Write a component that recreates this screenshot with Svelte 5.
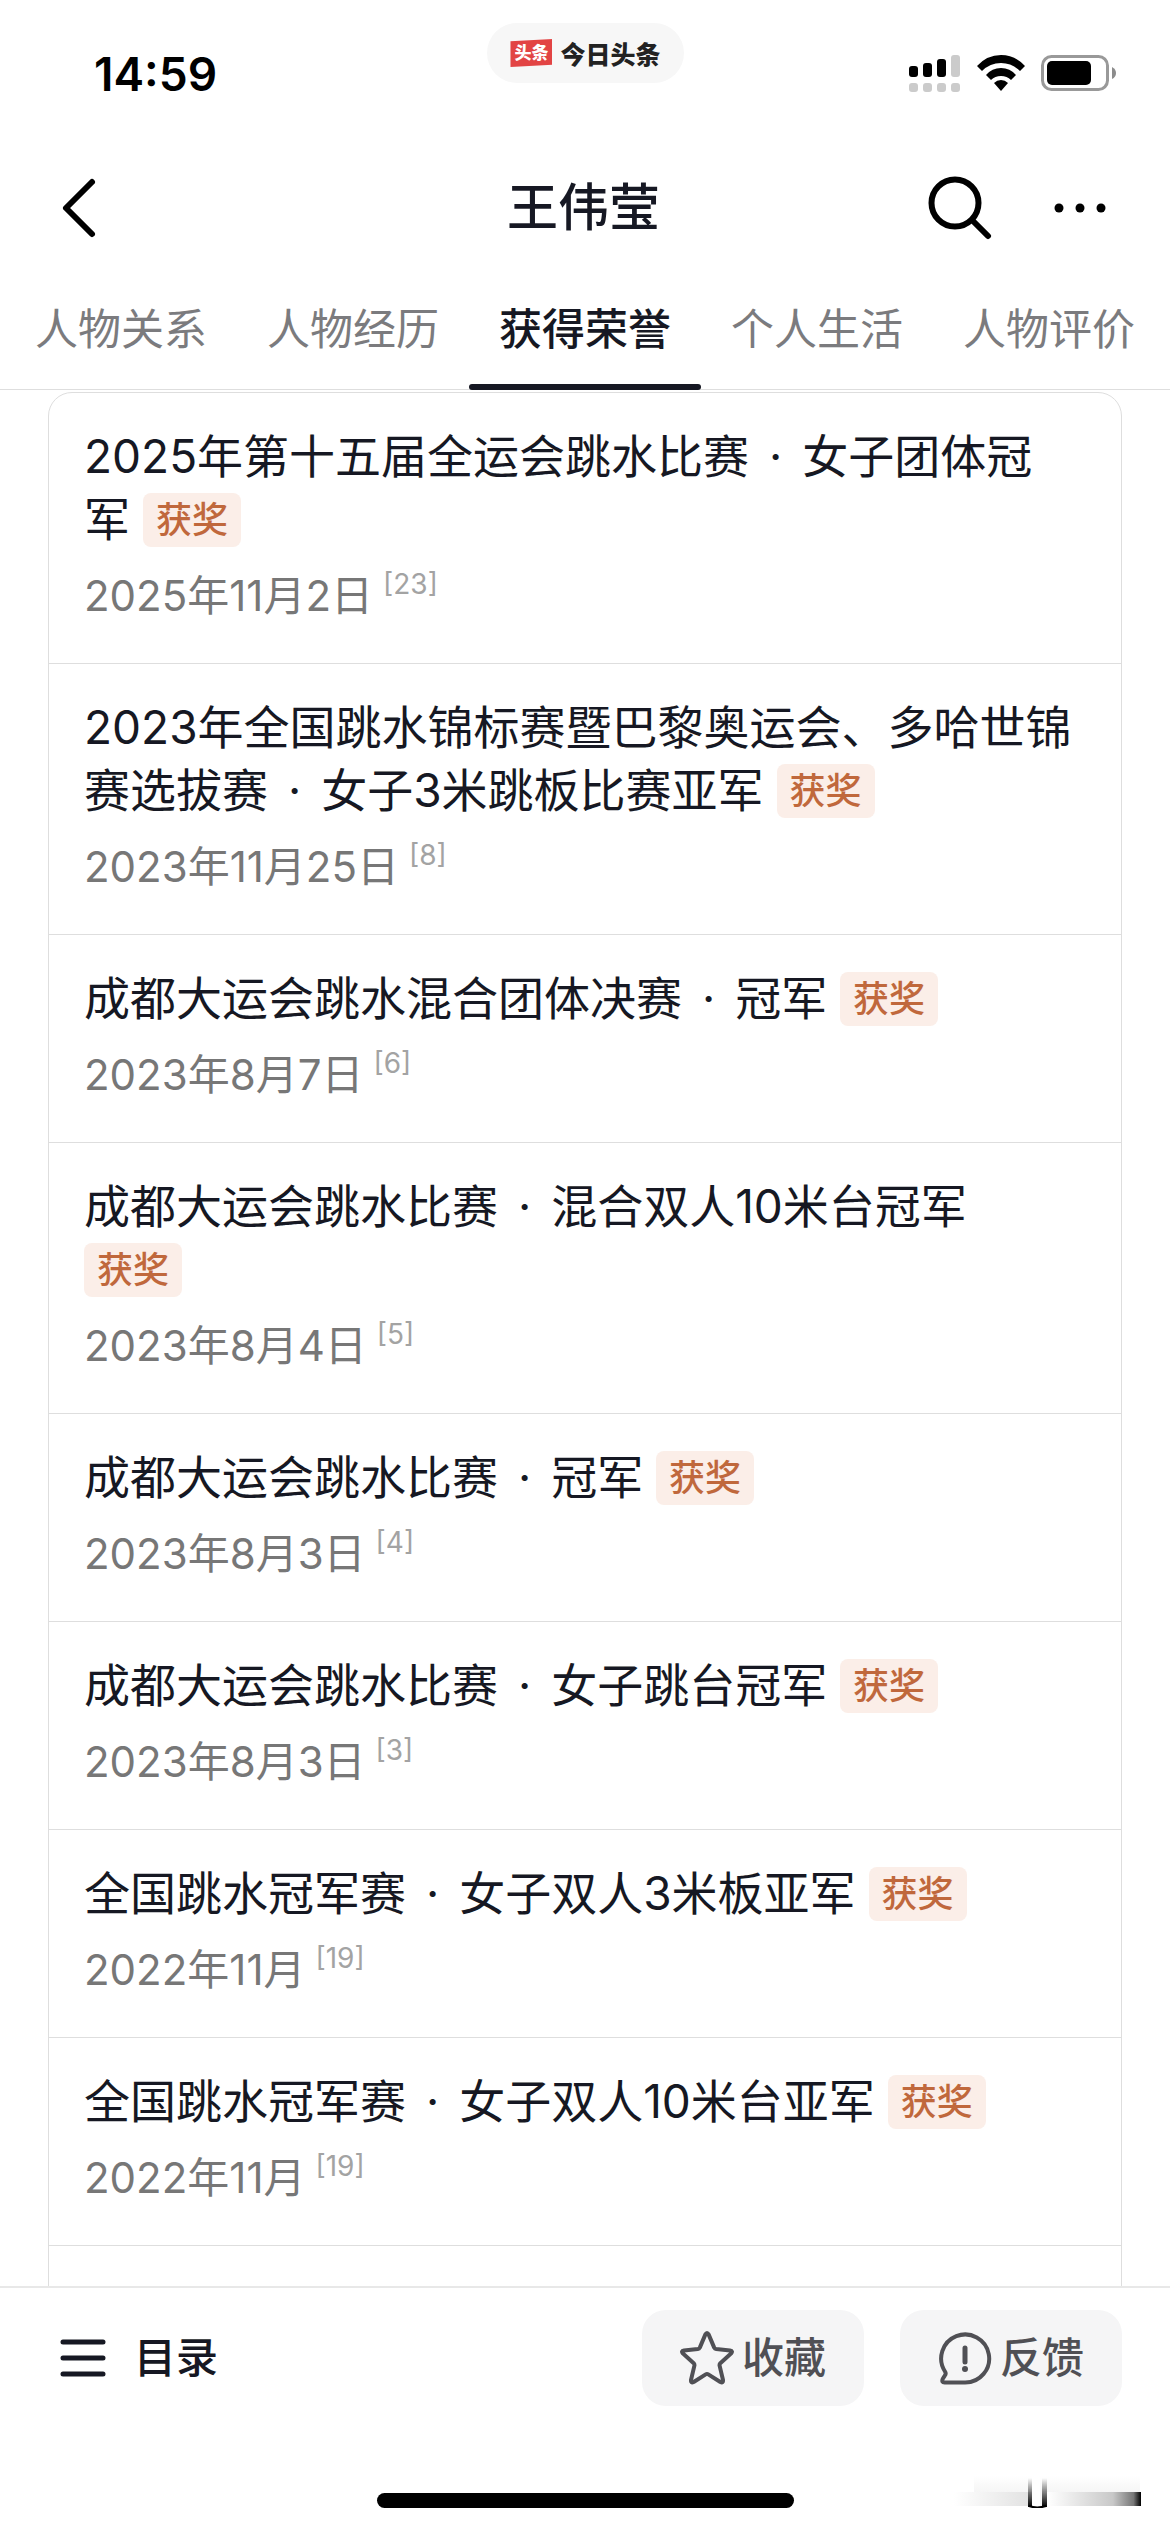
<script lang="ts">
	type Honor = {
		event: string;
		award: string;
		date: string;
		ref: number;
	};

	const tabs = ['人物关系', '人物经历', '获得荣誉', '个人生活', '人物评价'];

	const honors: Array<Honor> = [
		{ event: '2025年第十五届全运会跳水比赛', award: '女子团体冠军', date: '2025年11月2日', ref: 23 },
		{
			event: '2023年全国跳水锦标赛暨巴黎奥运会、多哈世锦赛选拔赛',
			award: '女子3米跳板比赛亚军',
			date: '2023年11月25日',
			ref: 8
		},
		{ event: '成都大运会跳水混合团体决赛', award: '冠军', date: '2023年8月7日', ref: 6 },
		{ event: '成都大运会跳水比赛', award: '混合双人10米台冠军', date: '2023年8月4日', ref: 5 },
		{ event: '成都大运会跳水比赛', award: '冠军', date: '2023年8月3日', ref: 4 },
		{ event: '成都大运会跳水比赛', award: '女子跳台冠军', date: '2023年8月3日', ref: 3 },
		{ event: '全国跳水冠军赛', award: '女子双人3米板亚军', date: '2022年11月', ref: 19 },
		{ event: '全国跳水冠军赛', award: '女子双人10米台亚军', date: '2022年11月', ref: 19 }
	];

	let active = $state(2);
</script>

<div class="page" lang="zh-CN">
	<div class="status">
		<time class="clock">14:59</time>
		<div class="app-pill">
			<span class="app-logo">头条</span>
			<span class="app-name">今日头条</span>
		</div>
		<div class="indicators">
			<svg width="52" height="38" viewBox="0 0 52 38" aria-hidden="true">
				<g fill="#000">
					<rect x="0" y="11" width="9" height="11" rx="3" />
					<rect x="14" y="8" width="9" height="14" rx="3" />
					<rect x="28" y="4" width="9" height="18" rx="3" />
				</g>
				<g fill="#cbcbcb">
					<rect x="42" y="0" width="9" height="22" rx="3" />
					<rect x="0" y="28" width="9" height="9" rx="3" />
					<rect x="14" y="28" width="9" height="9" rx="3" />
					<rect x="28" y="28" width="9" height="9" rx="3" />
					<rect x="42" y="28" width="9" height="9" rx="3" />
				</g>
			</svg>
			<svg width="48" height="38" viewBox="0 0 48 38" aria-hidden="true">
				<path d="M0 11Q10 0 24 0T48 11L43 16Q35 8 24 8T5 16Z" />
				<path d="M9 20Q15 13 24 13T39 20L34 25Q30 21 24 21T14 25Z" />
				<path d="M17 28Q20 25 24 25T31 28L24 36Z" />
			</svg>
			<svg width="76" height="38" viewBox="0 0 76 38" aria-hidden="true">
				<rect x="1.5" y="1.5" width="65" height="33" rx="9" fill="none" stroke="#999" stroke-width="3" />
				<rect x="6" y="6" width="44" height="24" rx="5" />
				<path d="M71 12Q75 14 75 18T71 24Z" fill="#8c8c8c" />
			</svg>
		</div>
	</div>

	<header class="nav">
		<button class="icon-button" aria-label="返回">
			<svg width="36" height="62" viewBox="0 0 36 62" aria-hidden="true">
				<path d="M31 5L5 31L31 57" fill="none" stroke="#000" stroke-width="6" stroke-linecap="round" stroke-linejoin="round" />
			</svg>
		</button>
		<h1>王伟莹</h1>
		<div class="nav-actions">
			<button class="icon-button" aria-label="搜索">
				<svg width="64" height="64" viewBox="0 0 64 64" aria-hidden="true">
					<g fill="none" stroke="#000" stroke-width="6" stroke-linecap="round">
						<circle cx="27" cy="27" r="23.5" />
						<path d="M45 45L60 60" />
					</g>
				</svg>
			</button>
			<button class="icon-button" aria-label="更多">
				<svg width="52" height="10" viewBox="0 0 52 10" aria-hidden="true">
					<circle cx="5" cy="5" r="4.5" />
					<circle cx="26" cy="5" r="4.5" />
					<circle cx="47" cy="5" r="4.5" />
				</svg>
			</button>
		</div>
	</header>

	<nav class="tabs">
		{#each tabs as tab, i}
			<button class="tab" class:active={i === active} onclick={() => (active = i)}>{tab}</button>
		{/each}
	</nav>

	<main>
		<ul class="card">
			{#each honors as h}
				<li>
					<p class="title">{h.event} <span class="dot">·</span> {h.award} <span class="tag">获奖</span></p>
					<p class="date">{h.date}<sup>[{h.ref}]</sup></p>
				</li>
			{/each}
			<li class="rest"></li>
		</ul>
	</main>

	<footer>
		<div class="toolbar">
			<button class="toc">
				<svg width="46" height="38" viewBox="0 0 46 38" aria-hidden="true">
					<path d="M3 3H43M3 19H43M3 35H43" stroke="#161823" stroke-width="5" stroke-linecap="round" />
				</svg>
				目录
			</button>
			<button class="action">
				<svg width="54" height="54" viewBox="0 0 54 54" aria-hidden="true">
					<path
						d="M25.3 3.6Q27 0.6 28.7 3.6L34.2 16.6Q34.8 17.8 36.2 18L50 19.4Q53.4 20 51 22.6L40.3 32.2Q39.3 33.2 39.6 34.6L43 49Q43.4 52.4 40.3 51L28.3 43.4Q27 42.6 25.7 43.4L13.7 51Q10.6 52.4 11 49L14.4 34.6Q14.7 33.2 13.7 32.2L3 22.6Q0.6 20 4 19.4L17.8 18Q19.2 17.8 19.8 16.6Z"
						fill="none"
						stroke="#505055"
						stroke-width="4"
						stroke-linejoin="round"
					/>
				</svg>
				收藏
			</button>
			<button class="action">
				<svg width="54" height="54" viewBox="0 0 54 54" aria-hidden="true">
					<g fill="none" stroke="#505055" stroke-width="4" stroke-linecap="round" stroke-linejoin="round">
						<path d="M27 51.5A24 24 0 1 0 7 40.5Q8.4 42.6 6.8 44.6L4.8 47.8Q3.2 51.5 6.6 51.5Z" />
						<path d="M27 17V31" stroke-width="5" />
					</g>
					<circle cx="27" cy="38" r="3" fill="#505055" />
				</svg>
				反馈
			</button>
		</div>
		<div class="home-area">
			<div class="home-bar"></div>
			<svg class="smudge" width="190" height="36" viewBox="0 0 190 36" aria-hidden="true">
				<defs>
					<linearGradient id="streak">
						<stop offset="0" stop-color="#fff" />
						<stop offset="0.4" stop-color="#e2e2e2" />
						<stop offset="0.5" stop-color="#fff" />
						<stop offset="0.85" stop-color="#c8c8c8" />
						<stop offset="0.96" stop-color="#777" />
						<stop offset="1" stop-color="#000" />
					</linearGradient>
					<linearGradient id="haze" x2="0" y2="1">
						<stop offset="0" stop-color="#fff" />
						<stop offset="1" stop-color="#f4f4f4" />
					</linearGradient>
					<linearGradient id="ink" x2="0" y2="1">
						<stop offset="0" stop-color="#000" stop-opacity="0" />
						<stop offset="1" stop-color="#000" />
					</linearGradient>
				</defs>
				<rect x="20" y="4" width="166" height="18" fill="url(#haze)" />
				<rect x="0" y="20" width="187" height="14" fill="url(#streak)" />
				<rect x="78" y="4" width="8" height="30" fill="#fff" />
				<rect x="74" y="6" width="4" height="29" fill="url(#ink)" />
				<rect x="88" y="6" width="5" height="29" fill="url(#ink)" />
				<path d="M75 34Q83 37 92 34" fill="none" stroke="#000" stroke-width="2" />
			</svg>
		</div>
	</footer>
</div>

<style>
	:global(body) {
		margin: 0;
		background: #fff;
	}

	.page {
		--ink: #161823;
		--line: #dedede;

		display: flex;
		flex-direction: column;
		height: 100vh;
		background: #fff;
		color: var(--ink);
		font-family: Inter, 'Noto Sans CJK SC', sans-serif;
	}

	button {
		padding: 0;
		border: none;
		background: none;
		color: inherit;
		font: inherit;
		cursor: pointer;
	}

	svg {
		display: block;
		flex: none;
	}

	.status {
		display: grid;
		grid-template-columns: 1fr auto 1fr;
		align-items: center;
		height: 148px;
		padding: 0 53px 0 94px;
		box-sizing: border-box;
		color: #000;
	}

	.clock {
		font-size: 46px;
		font-weight: 600;
	}

	.app-pill {
		display: flex;
		align-items: center;
		align-self: start;
		gap: 8px;
		height: 60px;
		margin: 23px 40px 0 0;
		padding: 0 23px;
		border-radius: 30px;
		background: #f7f7f7;
	}

	.app-logo {
		padding: 0 4px;
		background: #e24444;
		clip-path: polygon(0 8%, 100% 0, 100% 92%, 0 100%);
		color: #fff;
		font-size: 17px;
		font-weight: 900;
		line-height: 28px;
	}

	.app-name {
		color: #222;
		font-size: 25px;
		font-weight: 900;
	}

	.indicators {
		display: flex;
		justify-content: flex-end;
		gap: 16px;
	}

	.nav {
		display: grid;
		grid-template-columns: 1fr auto 1fr;
		align-items: center;
		height: 120px;
		padding: 0 64px 0 61px;
	}

	.nav > .icon-button {
		justify-self: start;
	}

	h1 {
		margin: 0;
		font-size: 51px;
		font-weight: 500;
		line-height: 60px;
	}

	.nav-actions {
		display: flex;
		align-items: center;
		justify-content: flex-end;
		gap: 62px;
	}

	.tabs {
		display: flex;
		justify-content: center;
		border-bottom: 1px solid var(--line);
	}

	.tab {
		position: relative;
		height: 122px;
		margin-bottom: -1px;
		padding: 0 30px;
		color: #7b7b7e;
		font-size: 43px;
		line-height: 1;

		&.active {
			color: var(--ink);
			font-weight: 500;

			&::after {
				content: '';
				position: absolute;
				right: 0;
				bottom: 0;
				left: 0;
				height: 6px;
				border-radius: 3px;
				background: var(--ink);
			}
		}
	}

	main {
		flex: 1;
		min-height: 0;
		overflow: hidden;
		padding: 2px 48px 0;
	}

	.card {
		margin: 0;
		padding: 0;
		border: 1px solid var(--line);
		border-radius: 24px;
		list-style: none;

		> li {
			padding: 32px 47px 37px 35px;
			border-bottom: 1px solid var(--line);
		}

		> .rest {
			height: 120px;
		}
	}

	.title,
	.date {
		margin: 0;
	}

	.title {
		font-size: 46px;
		line-height: 63px;
	}

	.dot {
		margin: 0 7px;
	}

	.tag {
		display: inline-block;
		padding: 0 13px;
		border-radius: 8px;
		background: #fbeee8;
		color: #c0683c;
		font-size: 36px;
		font-weight: 500;
		line-height: 54px;
		vertical-align: text-bottom;
	}

	.date {
		margin-top: 15px;
		color: #777;
		font-size: 42px;
		line-height: 60px;
	}

	sup {
		margin-left: 10px;
		color: #a3a3a3;
		font-size: 28px;
		line-height: 0;
		vertical-align: 17px;
	}

	footer {
		border-top: 2px solid #e8e8e8;
		background: #fff;
	}

	.toolbar {
		display: flex;
		align-items: center;
		gap: 36px;
		padding: 22px 48px 0 60px;
		font-size: 42px;
		font-weight: 500;
		line-height: 1;
	}

	.toc,
	.action {
		display: flex;
		align-items: center;
	}

	.toc {
		gap: 28px;
		margin-right: auto;
	}

	.action {
		justify-content: center;
		gap: 8px;
		width: 222px;
		height: 96px;
		border-radius: 24px;
		background: #f5f5f6;
		color: #505055;
	}

	.home-area {
		display: grid;
		grid-template-columns: 1fr auto 1fr;
		align-items: end;
		height: 102px;
		padding: 0 26px 24px;
	}

	.home-bar {
		grid-column: 2;
		width: 417px;
		height: 15px;
		border-radius: 8px;
		background: #000;
	}

	.smudge {
		justify-self: end;
	}
</style>
